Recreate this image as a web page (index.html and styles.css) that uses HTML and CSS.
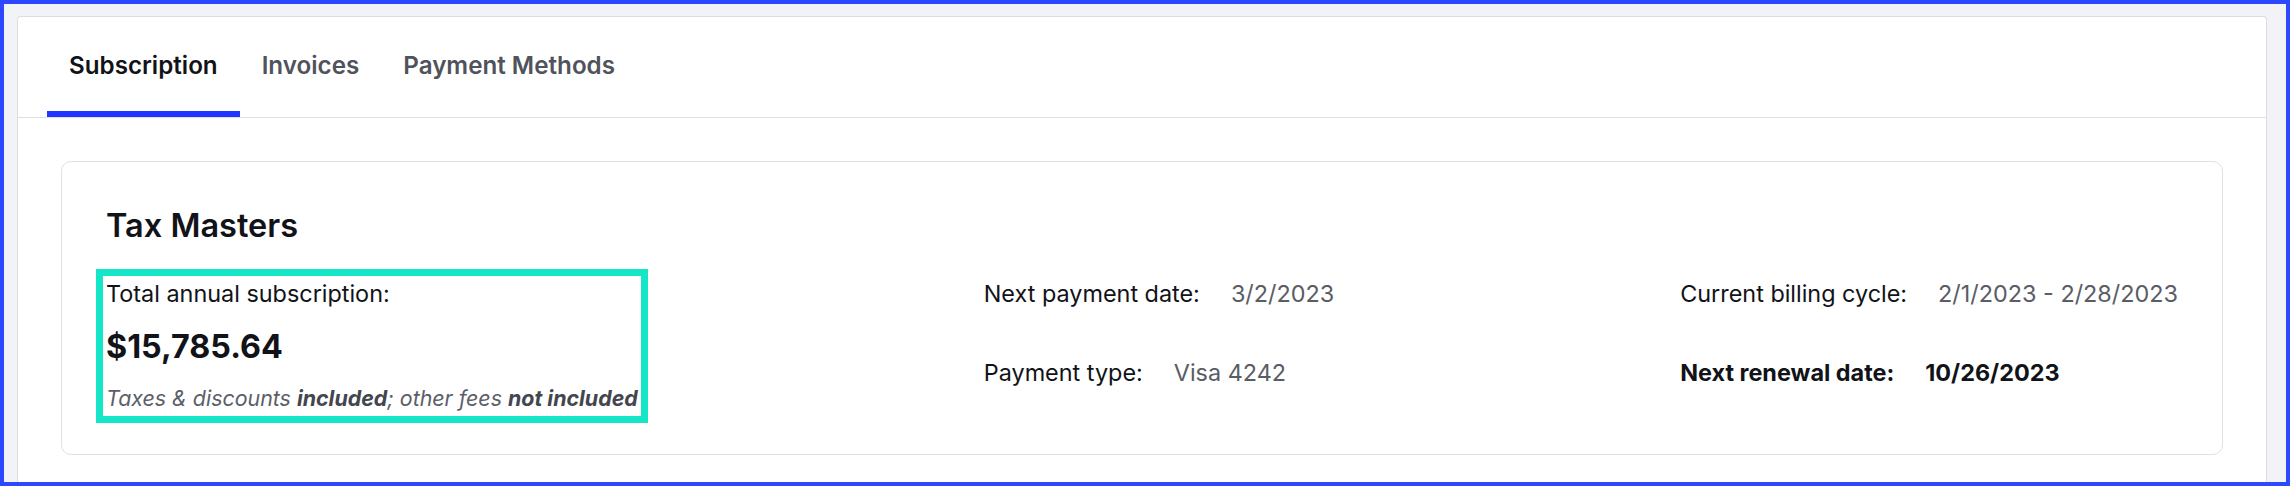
FILE: index.html
```html
<!DOCTYPE html>
<html lang="en">
<head>
  <meta charset="UTF-8">
  <meta name="viewport" content="width=device-width, initial-scale=1.0">
  <title>Billing</title>
  <link rel="stylesheet" href="styles.css">
</head>
<body>
  <div class="panel">
    <nav class="tabs">
      <a class="tab active" href="#">Subscription</a>
      <a class="tab" href="#">Invoices</a>
      <a class="tab" href="#">Payment Methods</a>
    </nav>
    <div class="content">
      <section class="plan">
        <h2>Tax Masters</h2>
        <div class="details">
          <div class="total">
            <div class="total-label">Total annual subscription:</div>
            <div class="amount">$15,785.64</div>
            <div class="note">Taxes &amp; discounts <b>included</b>; other fees <b>not included</b></div>
          </div>
          <div class="meta">
            <div class="row"><span class="label">Next payment date:</span><span class="value">3/2/2023</span></div>
            <div class="row"><span class="label">Payment type:</span><span class="value">Visa 4242</span></div>
          </div>
          <div class="meta">
            <div class="row"><span class="label">Current billing cycle:</span><span class="value">2/1/2023 - 2/28/2023</span></div>
            <div class="row strong"><span class="label">Next renewal date:</span><span class="value">10/26/2023</span></div>
          </div>
        </div>
      </section>
    </div>
  </div>
</body>
</html>
```

FILE: styles.css
```css
* {
  box-sizing: border-box;
}
body {
  font-family: Inter, "Noto Sans", sans-serif;
  background-color: #f2f3f7;
  color: #111318;
  margin: 0;
  height: 486px;
  overflow: hidden;
  border: 4px solid #2e48ff;
  padding: 12px 19px 0 13px;
}
.panel {
  background-color: #fff;
  border: 1px solid #dcdde1;
  border-bottom: none;
  border-radius: 4px 4px 0 0;
  height: 520px;
}
.tabs {
  display: flex;
  padding-left: 29px;
  border-bottom: 1px solid #dedfe3;
}
.tab {
  padding: 34px 22px 30px;
  font-size: 24.2px;
  line-height: 30px;
  font-weight: 600;
  color: #50535b;
  text-decoration: none;
  border-bottom: 6px solid transparent;
}
.tab.active {
  color: #111318;
  border-bottom-color: #2336ff;
}
.content {
  padding: 43px;
}
.plan {
  border: 1px solid #e0e1e4;
  border-radius: 10px;
  padding: 44px 44px 41px;
}
h2 {
  margin: 0 0 33px;
  font-size: 32.5px;
  line-height: 40px;
  font-weight: 600;
}
.details {
  display: flex;
  justify-content: space-between;
  align-items: flex-start;
}
.total {
  outline: 7px solid #14e6c7;
  outline-offset: 3px;
}
.total-label, .row {
  font-size: 23.4px;
  line-height: 30px;
}
.amount {
  margin: 18px 0 16px;
  font-size: 32.3px;
  line-height: 40px;
  font-weight: 700;
}
.note {
  font-size: 21.4px;
  line-height: 30px;
  font-style: italic;
  color: #5c5f68;
  white-space: nowrap;
}
.note b {
  color: #43464e;
  font-weight: 700;
}
.row {
  display: flex;
  gap: 31px;
  white-space: nowrap;
}
.row + .row {
  margin-top: 49px;
}
.value {
  color: #5a5d66;
}
.row.strong {
  font-weight: 700;
}
.row.strong .value {
  color: #111318;
}
```
